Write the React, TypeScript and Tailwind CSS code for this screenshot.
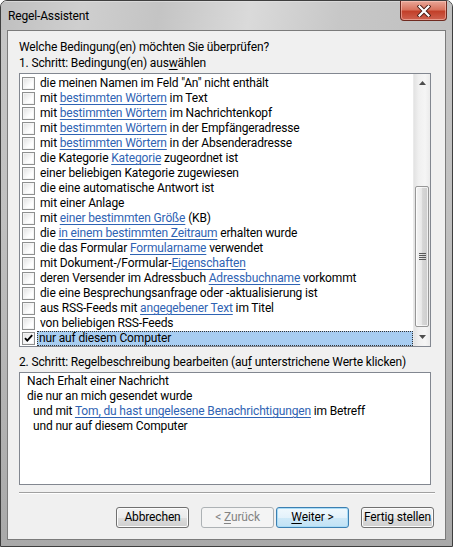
import React from "react";

type Seg = string | { l: string };

const rows: Seg[][] = [
  ['die meinen Namen im Feld "An" nicht enthält'],
  ["mit ", { l: "bestimmten Wörtern" }, " im Text"],
  ["mit ", { l: "bestimmten Wörtern" }, " im Nachrichtenkopf"],
  ["mit ", { l: "bestimmten Wörtern" }, " in der Empfängeradresse"],
  ["mit ", { l: "bestimmten Wörtern" }, " in der Absenderadresse"],
  ["die Kategorie ", { l: "Kategorie" }, " zugeordnet ist"],
  ["einer beliebigen Kategorie zugewiesen"],
  ["die eine automatische Antwort ist"],
  ["mit einer Anlage"],
  ["mit ", { l: "einer bestimmten Größe" }, " (KB)"],
  ["die ", { l: "in einem bestimmten Zeitraum" }, " erhalten wurde"],
  ["die das Formular ", { l: "Formularname" }, " verwendet"],
  ["mit Dokument-/Formular-", { l: "Eigenschaften" }],
  ["deren Versender im Adressbuch ", { l: "Adressbuchname" }, " vorkommt"],
  ["die eine Besprechungsanfrage oder -aktualisierung ist"],
  ["aus RSS-Feeds mit ", { l: "angegebener Text" }, " im Titel"],
  ["von beliebigen RSS-Feeds"],
];

function Link({ children }: { children: React.ReactNode }) {
  return (
    <span className="text-[#2f63b3] underline decoration-[#2f63b3] underline-offset-[2px]">
      {children}
    </span>
  );
}

function Segs({ segs }: { segs: Seg[] }) {
  return (
    <>
      {segs.map((s, i) =>
        typeof s === "string" ? <span key={i}>{s}</span> : <Link key={i}>{s.l}</Link>
      )}
    </>
  );
}

function Check({ checked }: { checked?: boolean }) {
  return (
    <div className="w-[13px] h-[13px] shrink-0 border border-[#8e8f8f] bg-[#f4f4f4] p-[1px]">
      <div className="w-full h-full bg-[linear-gradient(135deg,#e4e4e4,#ffffff_70%)] relative">
        {checked && (
          <svg width="11" height="11" viewBox="0 0 11 11" className="absolute -left-[1px] -top-[1px]">
            <path d="M2 5.2 L4.3 7.6 L9.2 2.2" fill="none" stroke="#000" strokeWidth="1.9" />
          </svg>
        )}
      </div>
    </div>
  );
}

function Btn({
  children,
  kind,
}: {
  children: React.ReactNode;
  kind?: "default" | "disabled";
}) {
  const base =
    "w-[73px] h-[21px] rounded-[3px] flex items-center justify-center whitespace-nowrap text-[12px] leading-[15px]";
  if (kind === "disabled")
    return (
      <div className={base + " border border-[#adb2b5] bg-[#f4f4f4] text-[#838383]"}>{children}</div>
    );
  if (kind === "default")
    return (
      <div
        className={
          base +
          " border border-[#3c7fb1] bg-[linear-gradient(to_bottom,#f0f8fd_0%,#e3f2fb_50%,#cfe9f8_51%,#c1e2f5_100%)] shadow-[inset_0_0_0_1px_#a9dcf7] text-black"
        }
      >
        {children}
      </div>
    );
  return (
    <div
      className={
        base +
        " border border-[#707070] bg-[linear-gradient(to_bottom,#f2f2f2_0%,#ebebeb_50%,#dddddd_51%,#cfcfcf_100%)] shadow-[inset_0_0_0_1px_#fcfcfc] text-black"
      }
    >
      {children}
    </div>
  );
}

function Tri({ up }: { up?: boolean }) {
  return (
    <svg width="7" height="4" viewBox="0 0 7 4">
      <path d={up ? "M0 4 L3.5 0 L7 4 Z" : "M0 0 L3.5 4 L7 0 Z"} fill="#4d4d4d" />
    </svg>
  );
}

export default function App() {
  return (
    <div className="w-[453px] h-[547px] font-['Roboto',sans-serif] text-[12px] leading-[15px] tracking-[-0.15px] text-black">
      <div className="w-[453px] h-[547px] flex flex-col border border-[#3f3f3f] rounded-t-[7px] bg-[linear-gradient(to_bottom,#c6c6c6_0%,#c0c0c0_40%,#a9a9a9_100%)] overflow-hidden">
        {/* title bar */}
        <div className="h-[29px] shrink-0 flex items-start bg-[linear-gradient(100deg,#bfbfbf_0%,#cfcfcf_18%,#c4c4c4_35%,#dadada_55%,#c7c7c7_75%,#c0c0c0_100%)] border-t border-[#e4e4e4]/60">
          <div className="pl-[7px] h-[28px] flex items-center">Regel-Assistent</div>
          <div className="flex-1" />
          <div className="mr-[5px] -mt-[1px] w-[47px] h-[20px] rounded-b-[4px] border border-t-0 border-[#6f2a20] bg-[linear-gradient(to_bottom,#e9a798_0%,#d9745f_45%,#c2402a_55%,#cf6250_100%)] shadow-[inset_0_0_0_1px_rgba(255,210,200,0.5)] flex items-center justify-center">
            <svg width="14" height="12" viewBox="0 0 14 12">
              <path d="M2.5 1.5 L11.5 10.5 M11.5 1.5 L2.5 10.5" stroke="#4a1c15" strokeWidth="4" strokeLinecap="square" />
              <path d="M2.5 1.5 L11.5 10.5 M11.5 1.5 L2.5 10.5" stroke="#ffffff" strokeWidth="2.2" strokeLinecap="square" />
            </svg>
          </div>
        </div>
        {/* body */}
        <div className="flex-1 px-[6px] pb-[6px] flex">
          <div className="w-[439px] h-[510px] border border-[#7b7b7b] bg-[#f0f0f0] flex flex-col pl-[11px]">
            <div className="mt-[9px] h-[16px]">Welche Bedingung(en) möchten Sie überprüfen?</div>
            <div className="h-[16px]">
              1. Schritt: Bedingung(en) aus<span className="underline underline-offset-[2px]">w</span>ählen
            </div>
            <div className="mt-[1px] w-[412px] h-[274px] border border-[#828790] bg-white flex">
              <div className="flex-1 pt-[2px] pl-[2px]">
                {rows.map((r, i) => (
                  <div key={i} className="h-[15px] flex items-center whitespace-nowrap">
                    <Check />
                    <div className="ml-[4px] pl-[1px]">
                      <Segs segs={r} />
                    </div>
                  </div>
                ))}
                <div className="h-[15px] flex items-center whitespace-nowrap">
                  <Check checked />
                  <div className="ml-[2px] flex-1 h-[15px] bg-[#a8cdf1] border border-dotted border-[#333] pl-[1px] flex items-center">
                    nur auf diesem Computer
                  </div>
                </div>
              </div>
              {/* scrollbar */}
              <div className="w-[17px] shrink-0 flex flex-col bg-[linear-gradient(to_right,#e3e3e3,#f0f0f0_30%,#f5f5f5_70%,#ebebeb)] border-l border-[#eaeaea]">
                <div className="h-[17px] flex items-center justify-center">
                  <Tri up />
                </div>
                <div className="h-[95px]" />
                <div className="mx-[1px] h-[141px] rounded-[2px] border border-[#979797] bg-[linear-gradient(to_right,#f4f4f4,#e9e9e9_45%,#d6d6d6_55%,#cdcdcd)] shadow-[inset_0_0_0_1px_rgba(255,255,255,0.7)] flex items-center justify-center">
                  <div className="flex flex-col gap-[1px]">
                    <div className="w-[7px] h-[1px] bg-[#5a5a5a]" />
                    <div className="w-[7px] h-[1px] bg-[#5a5a5a]" />
                    <div className="w-[7px] h-[1px] bg-[#5a5a5a]" />
                    <div className="w-[7px] h-[1px] bg-[#5a5a5a]" />
                  </div>
                </div>
                <div className="flex-1 flex items-center justify-center">
                  <Tri />
                </div>
              </div>
            </div>
            <div className="mt-[8px] h-[15px]">
              2. Schritt: Regelbeschreibung bearbeiten (au<span className="underline underline-offset-[2px]">f</span> unterstrichene Werte klicken)
            </div>
            <div className="mt-[2px] w-[412px] h-[113px] border border-[#828790] bg-white pt-[1px] pl-[7px]">
              <div>Nach Erhalt einer Nachricht</div>
              <div>die nur an mich gesendet wurde</div>
              <div className="pl-[6px]">
                und mit <Link>Tom, du hast ungelesene Benachrichtigungen</Link> im Betreff
              </div>
              <div className="pl-[6px]">und nur auf diesem Computer</div>
            </div>
            <div className="mt-[7px] w-[416px] h-[2px] border-t border-[#a0a0a0] border-b border-b-white" />
            <div className="mt-[13px] w-[415px] flex justify-end">
              <Btn>Abbrechen</Btn>
              <div className="w-[12px]" />
              <Btn kind="disabled">
                &lt;&nbsp;<span className="underline underline-offset-[2px]">Z</span>urück
              </Btn>
              <div className="w-[2px]" />
              <Btn kind="default">
                <span className="underline underline-offset-[2px]">W</span>eiter &gt;
              </Btn>
              <div className="w-[12px]" />
              <Btn>Fertig stellen</Btn>
            </div>
          </div>
        </div>
      </div>
    </div>
  );
}
